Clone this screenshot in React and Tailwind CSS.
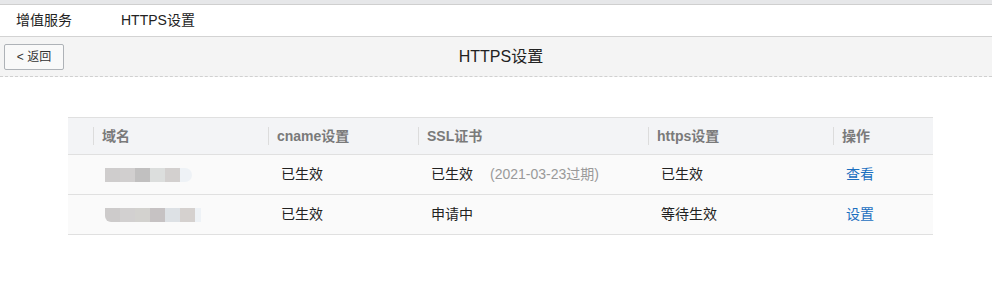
export default function App() {
  const font = { fontFamily: '"Liberation Sans", "Noto Sans CJK SC", sans-serif' };
  const headers = ["域名", "cname设置", "SSL证书", "https设置", "操作"];
  const cols = "grid grid-cols-[25px_175px_150px_230px_185px_100px]";
  return (
    <div className="w-[992px] h-[293px] bg-white text-[#222]" style={font}>
      <div className="h-[5px] bg-[#e6e7e9] border-b border-[#cfcfcf]"></div>
      <div className="h-[32px] flex items-center border-b border-[#d3d3d3] text-[14px] text-[#222]">
        <span className="ml-[16px]">增值服务</span>
        <span className="ml-[49px]">HTTPS设置</span>
      </div>
      <div className="relative h-[40px] bg-[#f4f4f4] border-b border-dashed border-[#d0d0d0] flex items-center">
        <button className="ml-[4px] w-[60px] h-[26px] border border-[#aeb2b7] rounded-[2px] bg-[#f9f9f9] text-[12px] text-[#333] flex items-center justify-center" style={font}>
          &lt; 返回
        </button>
        <div className="absolute left-[10px] right-0 text-center text-[16px] text-[#222] pointer-events-none">HTTPS设置</div>
      </div>
      <div className="pt-[40px] pl-[68px]">
        <div className="w-[865px]">
          <div className={`${cols} h-[38px] bg-[#f3f4f6] border-t border-b border-[#e0e0e0] items-center`}>
            <div></div>
            {headers.map((h) => (
              <div key={h} className="flex items-center">
                <div className="w-px h-[18px] bg-[#dcdcdc]"></div>
                <span className="pl-[8px] text-[14px] font-bold text-[#7a7a7a]">{h}</span>
              </div>
            ))}
          </div>
          <div className={`${cols} h-[40px] bg-[#fafafa] border-b border-[#e0e0e0] items-center text-[14px]`}>
            <div></div>
            <div className="pl-[12px] flex">
              <div className="flex h-[14px] blur-[0.6px]">
                <div className="w-[15px] bg-[#cfcdcd]"></div>
                <div className="w-[15px] bg-[#d1cfcf]"></div>
                <div className="w-[15px] bg-[#c1c0c0]"></div>
                <div className="w-[15px] bg-[#dcdedd]"></div>
                <div className="w-[15px] bg-[#d3d0cf]"></div>
                <div className="w-[12px] bg-[#eef2f6] rounded-r-full"></div>
              </div>
            </div>
            <div className="pl-[13px]">已生效</div>
            <div className="pl-[13px] flex">
              <span>已生效</span>
              <span className="ml-[17px] text-[#999]">(2021-03-23过期)</span>
            </div>
            <div className="pl-[13px]">已生效</div>
            <div className="pl-[13px] text-[#1a6fc0]">查看</div>
          </div>
          <div className={`${cols} h-[40px] bg-[#fafafa] border-b border-[#e0e0e0] items-center text-[14px]`}>
            <div></div>
            <div className="pl-[12px] flex">
              <div className="flex h-[14px] blur-[0.6px]">
                <div className="w-[15px] bg-[#cdcbcb] rounded-bl-[6px]"></div>
                <div className="w-[15px] bg-[#d2d0d0]"></div>
                <div className="w-[15px] bg-[#d3d2cf]"></div>
                <div className="w-[15px] bg-[#c6c2c3]"></div>
                <div className="w-[15px] bg-[#dde1e5]"></div>
                <div className="w-[15px] bg-[#d5d1cf]"></div>
                <div className="w-[6px] bg-[#eef2f6]"></div>
              </div>
            </div>
            <div className="pl-[13px]">已生效</div>
            <div className="pl-[13px]">申请中</div>
            <div className="pl-[13px]">等待生效</div>
            <div className="pl-[13px] text-[#1a6fc0]">设置</div>
          </div>
        </div>
      </div>
    </div>
  );
}
